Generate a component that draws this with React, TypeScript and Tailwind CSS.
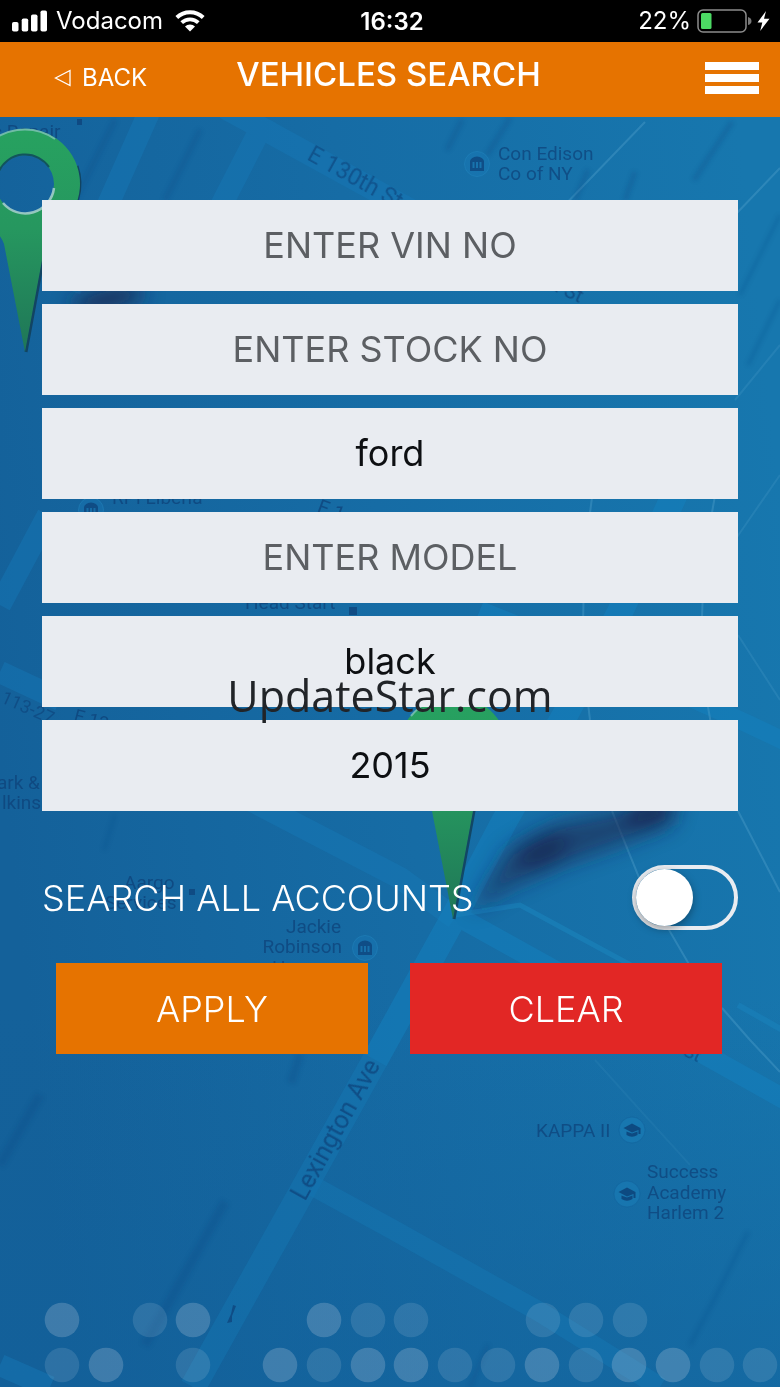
import React, { useState } from "react";

type Field = { id: string; label: string; initial: string };

const FIELDS: Field[] = [
  { id: "vin", label: "ENTER VIN NO", initial: "" },
  { id: "stock", label: "ENTER STOCK NO", initial: "" },
  { id: "make", label: "ENTER MAKE", initial: "ford" },
  { id: "model", label: "ENTER MODEL", initial: "" },
  { id: "colour", label: "ENTER COLOUR", initial: "black" },
  { id: "year", label: "ENTER YEAR", initial: "2015" },
];

const INITIAL_VALUES: Record<string, string> = Object.fromEntries(
  FIELDS.map((f) => [f.id, f.initial]),
);

// [centre x, centre y, opacity]
const DOTS: [number, number, number][] = [
  [62, 1320, 0.21], [150, 1320, 0.13], [193, 1320, 0.21], [324, 1320, 0.21], [368, 1320, 0.13],
  [411, 1320, 0.13], [543, 1320, 0.13], [586, 1320, 0.13], [630, 1320, 0.13],
  [62, 1365, 0.13], [106, 1365, 0.21], [193, 1365, 0.13], [280, 1365, 0.21], [324, 1365, 0.13],
  [368, 1365, 0.21], [411, 1365, 0.21], [455, 1365, 0.13], [498, 1365, 0.13], [542, 1365, 0.21],
  [586, 1365, 0.13], [629, 1365, 0.21], [673, 1365, 0.21], [717, 1365, 0.13], [760, 1365, 0.13],
];

function Pin({ x, y }: { x: number; y: number }) {
  return (
    <g transform={`translate(${x} ${y})`}>
      <path
        d="M1 168 L21 60 Q25 50 35 42 A55 55 0 0 0 52 -18"
        fill="none"
        stroke="#123a4f"
        strokeWidth="3"
        opacity="0.75"
      />
      <path
        fillRule="evenodd"
        fill="url(#pin)"
        d="M0 168 L-21 60 Q-24 51 -34 43 A55 55 0 1 1 34 43 Q24 51 20 60 Z M0 -29 A29 29 0 1 0 0 29 A29 29 0 1 0 0 -29 Z"
      />
      <path d="M-42 -35 A54 54 0 0 1 30 -45" fill="none" stroke="#8fc7c4" strokeWidth="2" opacity="0.7" />
      <path d="M29 4 A29 29 0 0 1 -22 19" fill="none" stroke="#a9d0cf" strokeWidth="2.5" opacity="0.85" />
      <path d="M-26 -13 A29 29 0 0 1 24 -17" fill="none" stroke="#12545c" strokeWidth="2" />
    </g>
  );
}

function Museum({ x, y }: { x: number; y: number }) {
  return (
    <g transform={`translate(${x} ${y})`}>
      <circle r="12.5" fill="#1a7cba" fillOpacity="0.35" stroke="#2385bd" strokeOpacity="0.5" />
      <path
        d="M-7 -3 Q-6 -7 0 -7.500 Q6 -7 7 -3 V7 H-7 Z M-4.500 -2 V4 H-2.500 V-2 Z M-1 -2 V4 H1 V-2 Z M2.500 -2 V4 H4.500 V-2 Z"
        fill="#0d4379"
        fillRule="evenodd"
        opacity="0.75"
      />
    </g>
  );
}

function School({ x, y }: { x: number; y: number }) {
  return (
    <g transform={`translate(${x} ${y})`}>
      <circle r="13" fill="#1a80b9" fillOpacity="0.5" stroke="#12609a" strokeOpacity="0.5" />
      <path
        d="M-8.500 -2 L0 -6.500 L8.500 -2 V4 H6.500 V0 L0 2.500 Z M-5.500 1.500 L0 3.500 L5.500 1.500 V5 Q0 8.500 -5.500 5 Z"
        fill="#0d4379"
        opacity="0.85"
      />
    </g>
  );
}

function MapBackdrop() {
  return (
    <svg
      aria-hidden="true"
      className="absolute inset-0 h-full w-full"
      viewBox="0 0 780 1387"
      preserveAspectRatio="xMidYMin slice"
    >
      <defs>
        <linearGradient id="sea" x1="0" y1="0.55" x2="1" y2="0.35">
          <stop offset="0" stopColor="#14619a" />
          <stop offset="0.5" stopColor="#166ca5" />
          <stop offset="1" stopColor="#1777ae" />
        </linearGradient>
        <linearGradient id="floor" x1="0" y1="0" x2="0" y2="1">
          <stop offset="0.72" stopColor="#125f99" stopOpacity="0" />
          <stop offset="1" stopColor="#125f99" stopOpacity="0.5" />
        </linearGradient>
        <linearGradient id="pin" x1="0" y1="0" x2="0" y2="1">
          <stop offset="0" stopColor="#27a260" />
          <stop offset="0.45" stopColor="#26975f" />
          <stop offset="1" stopColor="#1f7657" />
        </linearGradient>
        <filter id="soft" x="-50%" y="-50%" width="200%" height="200%">
          <feGaussianBlur stdDeviation="10" />
        </filter>
        <filter id="haze" x="-50%" y="-50%" width="200%" height="200%">
          <feGaussianBlur stdDeviation="2" />
        </filter>
      </defs>
      <rect width="780" height="1387" fill="url(#sea)" />
      <rect width="780" height="1387" fill="url(#floor)" />

      <g fill="none" stroke="#1679b8" strokeWidth="22" opacity="0.45">
        <path d="M150 110 L110 200 L70 290" />
        <path d="M266 118 L224 200 L200 250" />
        <path d="M225 108 L420 215" />
        <path d="M48 515 L0 605" />
        <path d="M0 672 L60 700" />
        <path d="M250 800 L400 878 L455 918" />
        <path d="M0 1365 L50 1387" />
      </g>
      <g fill="none" stroke="#1580bd" strokeWidth="26" opacity="0.55">
        <path d="M700 440 L620 612 L565 715 L505 820 L455 915 L375 1060" />
        <path d="M375 1060 L300 1195 L193 1387" opacity="0.6" />
        <path d="M455 915 L545 965 L800 1108" strokeWidth="20" />
        <path d="M313 1186 L390 1228 L540 1312 L660 1387" strokeWidth="20" opacity="0.6" />
        <path d="M480 610 Q680 690 790 744" strokeWidth="18" />
      </g>
      <path d="M455 915 L520 905 L640 970" fill="none" stroke="#1a83bd" strokeWidth="5" opacity="0.6" />
      <path d="M738 1005 L800 1040" fill="none" stroke="#1a83bd" strokeWidth="6" opacity="0.5" />

      <g fill="none" stroke="#4b9bc8" strokeWidth="2" opacity="0.45">
        <path d="M780 168 L735 215" />
        <path d="M645 122 L560 210" />
        <path d="M716 490 Q690 620 712 730" />
        <path d="M593 490 Q575 610 590 720" />
        <path d="M612 811 L640 880 L690 966" />
        <path d="M738 811 L780 892" />
        <path d="M722 1008 L750 1040 L780 1072" />
        <path d="M738 635 L780 700" opacity="0.6" />
        <path d="M780 475 L735 540" opacity="0.6" />
        <path d="M780 345 L735 400" opacity="0.6" />
        <path d="M595 1060 L640 1110 L690 1165" opacity="0.3" />
      </g>

      <g fill="none" stroke="#0e4d88" strokeWidth="5" opacity="0.3" filter="url(#haze)">
        <path d="M115 120 L75 200" />
        <path d="M200 130 L165 200" />
        <path d="M462 120 L447 150" />
        <path d="M510 118 L487 155" />
        <path d="M588 170 L575 200" />
        <path d="M635 172 L625 200" />
        <path d="M732 122 L694 180" />
        <path d="M780 215 L740 295" strokeWidth="3" />
        <path d="M780 300 L748 365" strokeWidth="3" />
        <path d="M115 815 L104 850" strokeWidth="3" />
        <path d="M40 1095 L0 1165" strokeWidth="9" />
        <path d="M225 1202 L145 1345" strokeWidth="9" />
        <path d="M300 1054 L291 1083" strokeWidth="8" />
        <path d="M748 1232 L715 1298 L690 1345" strokeWidth="3" />
        <path d="M488 1345 L470 1387" strokeWidth="4" />
      </g>

      <g fill="#1b2750" filter="url(#soft)">
        <ellipse cx="108" cy="299" rx="38" ry="9" transform="rotate(-12 108 299)" />
        <path d="M470 912 L508 850 L560 822 L640 806 L672 796 L672 824 L620 845 L560 866 L510 888 Z" opacity="0.6" />
        <ellipse cx="542" cy="850" rx="26" ry="16" transform="rotate(-25 542 850)" opacity="0.7" />
        <ellipse cx="650" cy="812" rx="28" ry="15" transform="rotate(-15 650 812)" opacity="0.75" />
      </g>

      <g fontFamily="Roboto, sans-serif" fontSize="19" fill="#0e3f76" opacity="0.68">
        <text x="-8" y="138">c Repair</text>
        <rect x="77" y="119" width="5" height="6" />
        <text x="498" y="160">Con Edison</text>
        <text x="498" y="180">Co of NY</text>
        <text transform="translate(306 159) rotate(29)" fontSize="23" opacity="0.85">E 130th St</text>
        <text transform="translate(532 281) rotate(25)" fontSize="20">9th St</text>
        <text x="112" y="504">RPI Liberia</text>
        <text transform="translate(316 512) rotate(20)" fontSize="20">E 1</text>
        <text x="245" y="609">Head Start</text>
        <rect x="349" y="607" width="8" height="8" />
        <text transform="translate(0 702) rotate(24)" fontSize="18" opacity="0.8">113-27</text>
        <text transform="translate(73 721) rotate(15)" fontSize="18">E 12</text>
        <text x="-3" y="789">ark &amp;</text>
        <text x="2" y="809">lkins</text>
        <text x="124" y="889">Aargo</text>
        <text x="105" y="909">Services</text>
        <rect x="189" y="889" width="6" height="6" />
        <text x="341" y="933" textAnchor="end">Jackie</text>
        <text x="342" y="953" textAnchor="end">Robinson</text>
        <text x="272" y="974">Houses</text>
        <text transform="translate(305 1202) rotate(-61)" fontSize="25">Lexington Ave</text>
        <text transform="translate(682 1055) rotate(25)">St</text>
        <text x="536" y="1137">KAPPA II</text>
        <text x="647" y="1178">Success</text>
        <text x="647" y="1199">Academy</text>
        <text x="647" y="1219">Harlem 2</text>
        <path d="M227 1323 L231 1314 L233 1305 L236 1306 L232 1316 L232 1322 Z" />
      </g>
      <Museum x={477} y={164} />
      <Museum x={365} y={948} />
      <Museum x={91} y={510} />
      <School x={632} y={1130} />
      <School x={627} y={1194} />
      <Pin x={25} y={184} />
      <Pin x={453} y={751} />

      {DOTS.map(([cx, cy, opacity]) => (
        <circle key={`${cx}-${cy}`} cx={cx} cy={cy} r="17.3" fill="#e2e4ee" opacity={opacity} />
      ))}
    </svg>
  );
}

function StatusBar() {
  return (
    <div className="relative grid h-[42px] grid-cols-[1fr_auto_1fr] items-center bg-black px-3 text-2xl text-white">
      <div className="flex items-center">
        <svg className="h-[22px] w-[36px]" viewBox="0 0 36 22" fill="currentColor" aria-hidden="true">
          <rect x="0" y="12" width="6.500" height="9.500" rx="1.800" />
          <rect x="9.700" y="8.500" width="6.500" height="13" rx="1.800" />
          <rect x="19" y="4.500" width="6.500" height="17" rx="1.800" />
          <rect x="28.500" y="0.500" width="6.500" height="21" rx="1.800" />
        </svg>
        <span className="ml-2">Vodacom</span>
        <svg className="ml-3 h-[22px] w-[30px]" viewBox="0 0 30 22" fill="none" aria-hidden="true">
          <path d="M1.800 7.500 A19 19 0 0 1 28.200 7.500" stroke="currentColor" strokeWidth="4" />
          <path d="M6.700 12.700 A12 12 0 0 1 23.300 12.700" stroke="currentColor" strokeWidth="3.800" />
          <path d="M15 21.500 L10 16.600 A7 7 0 0 1 20 16.600 Z" fill="currentColor" />
        </svg>
      </div>
      <span className="pt-0.5 pl-1 font-semibold">16:32</span>
      <div className="flex items-center justify-end">
        <span>22%</span>
        <svg className="-mr-1 ml-1.5 h-6 w-[75px]" viewBox="0 0 75 24" aria-hidden="true">
          <rect x="1" y="1" width="48" height="22" rx="5" fill="none" stroke="#8c8c8c" strokeWidth="1.500" />
          <rect x="4" y="4" width="10.500" height="16" rx="1.500" fill="#4cd964" />
          <path d="M51 8 Q54.500 9 54.500 12 Q54.500 15 51 16 Z" fill="#777" />
          <path d="M69 2 L60.500 13.500 H65.300 L63.200 22 L72.500 9.700 H67 Z" fill="#fff" />
        </svg>
      </div>
    </div>
  );
}

export default function App() {
  const [values, setValues] = useState(INITIAL_VALUES);
  const [allAccounts, setAllAccounts] = useState(false);

  const clear = () => {
    setValues(Object.fromEntries(FIELDS.map((f) => [f.id, ""])));
    setAllAccounts(false);
  };

  return (
    <div className="relative min-h-screen overflow-hidden bg-[#156ca6] font-['Inter',sans-serif]">
      <MapBackdrop />
      <StatusBar />
      <header className="relative grid h-[75px] grid-cols-[1fr_auto_1fr] items-center bg-[#e67300] pr-[21px] pb-1 pl-[54px] text-white">
        <button type="button" className="flex items-center gap-2.5 justify-self-start text-2xl">
          <svg className="h-[18px] w-[18px]" viewBox="0 0 18 18" fill="none" stroke="currentColor" strokeWidth="1.300" aria-hidden="true">
            <path d="M1.500 9 L16 1.500 V16.500 Z" />
          </svg>
          BACK
        </button>
        <h1 className="-ml-9 pb-1.5 text-[33px] font-medium">VEHICLES SEARCH</h1>
        <button type="button" aria-label="Menu" className="flex w-[54px] flex-col gap-1 justify-self-end">
          <span className="h-2 w-full bg-white" />
          <span className="h-2 w-full bg-white" />
          <span className="h-2 w-full bg-white" />
        </button>
      </header>

      <main className="relative px-[42px] pt-[83px] pb-12">
        <form onSubmit={(e: React.FormEvent) => e.preventDefault()}>
          <div className="relative flex flex-col gap-[13px]">
            {FIELDS.map((f) => (
              <input
                key={f.id}
                id={f.id}
                aria-label={f.label}
                placeholder={f.label}
                value={values[f.id]}
                onChange={(e) => setValues({ ...values, [f.id]: e.target.value })}
                className="h-[91px] w-full bg-[#e9ecf1] pb-0.5 text-center text-4xl text-[#0d0f12] outline-none placeholder:text-[#5c5f63]"
              />
            ))}
            <div className="pointer-events-none absolute inset-x-0 bottom-[85px] text-center font-['Open_Sans',sans-serif] text-[43px] leading-[60px] text-[#212428]">
              UpdateStar.com
            </div>
          </div>

          <div className="mt-[54px] flex items-center justify-between">
            <label htmlFor="all-accounts" className="text-4xl font-light text-white">
              SEARCH ALL ACCOUNTS
            </label>
            <input
              id="all-accounts"
              type="checkbox"
              role="switch"
              checked={allAccounts}
              onChange={(e) => setAllAccounts(e.target.checked)}
              className="h-[65px] w-[106px] shrink-0 cursor-pointer appearance-none rounded-full border-4 border-[#e9ecf1] before:block before:h-[57px] before:w-[57px] before:rounded-full before:bg-white before:shadow-[0_3px_8px_rgba(0,0,0,0.35)] checked:before:ml-[41px]"
            />
          </div>

          <div className="mt-[33px] grid grid-cols-2 gap-[42px] pr-4 pl-[14px] text-4xl font-light text-white">
            <button type="submit" className="h-[91px] bg-[#e67300]">
              APPLY
            </button>
            <button type="button" onClick={clear} className="h-[91px] bg-[#e22725]">
              CLEAR
            </button>
          </div>
        </form>
      </main>
    </div>
  );
}
